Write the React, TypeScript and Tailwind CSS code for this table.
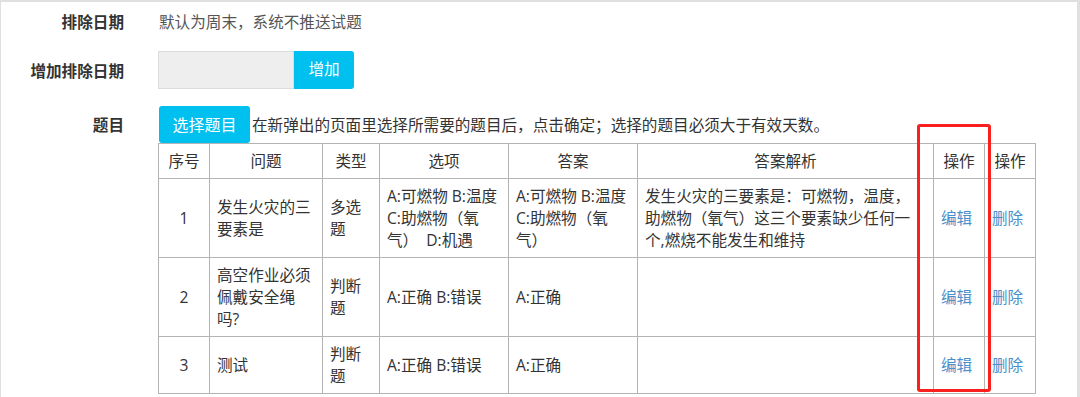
import React from "react";

const FONT = { fontFamily: '"Open Sans", "Noto Sans CJK SC", sans-serif' };

type Row = {
  no: number;
  question: string[];
  kind: string[];
  options: string[];
  answer: string[];
  analysis: string[];
};

const ROWS: Row[] = [
  {
    no: 1,
    question: ["发生火灾的三", "要素是"],
    kind: ["多选", "题"],
    options: ["A:可燃物 B:温度", "C:助燃物（氧", "气）  D:机遇"],
    answer: ["A:可燃物 B:温度", "C:助燃物（氧", "气）"],
    analysis: ["发生火灾的三要素是：可燃物，温度，", "助燃物（氧气）这三个要素缺少任何一", "个,燃烧不能发生和维持"],
  },
  {
    no: 2,
    question: ["高空作业必须", "佩戴安全绳", "吗?"],
    kind: ["判断", "题"],
    options: ["A:正确 B:错误"],
    answer: ["A:正确"],
    analysis: [],
  },
  {
    no: 3,
    question: ["测试"],
    kind: ["判断", "题"],
    options: ["A:正确 B:错误"],
    answer: ["A:正确"],
    analysis: [],
  },
];

function Lines({ lines }: { lines: string[] }) {
  return (
    <>
      {lines.map((l, i) => (
        <span key={i} className="block whitespace-pre">
          {l}
        </span>
      ))}
    </>
  );
}

const th = "border border-[#b4b4b4] px-[6px] py-[6px] font-normal text-center";
const td = "border border-[#b4b4b4] px-[7px] py-[6px] align-middle";

export default function App() {
  return (
    <div
      className="relative w-[1080px] h-[397px] overflow-hidden bg-white border-t-2 border-l border-r-[3px] border-[#e0e0e0] text-[15.6px] text-[#333]"
      style={FONT}
    >
      <div className="pt-[2px]">
        {/* 排除日期 */}
        <div className="flex items-center h-[38px]">
          <div className="w-[123px] text-right font-bold">排除日期</div>
          <div className="ml-[35px] text-[#555]">默认为周末，系统不推送试题</div>
        </div>

        {/* 增加排除日期 */}
        <div className="flex items-center mt-[9px]">
          <div className="w-[123px] text-right font-bold pt-[3px]">增加排除日期</div>
          <div className="ml-[34px] flex">
            <input className="w-[136px] h-[38px] bg-[#eeeeee] border border-[#dcdcdc] outline-none px-2" />
            <button className="w-[60px] h-[38px] bg-[#00c0ef] text-white rounded-r-[3px]">增加</button>
          </div>
        </div>

        {/* 题目 */}
        <div className="flex mt-[17px]">
          <div className="w-[123px] text-right font-bold h-[37px] flex items-center justify-end pt-[2px]">题目</div>
          <div className="ml-[34px] flex flex-col">
            <div className="flex items-center">
              <button className="ml-[1px] w-[91px] h-[37px] bg-[#00c0ef] text-white rounded-[3px] text-[16px]">选择题目</button>
              <span className="ml-[2px] pt-[2px]">在新弹出的页面里选择所需要的题目后，点击确定；选择的题目必须大于有效天数。</span>
            </div>
            <table className="table-fixed border-collapse w-[877px] leading-[22px]">
              <colgroup>
                <col className="w-[51px]" />
                <col className="w-[113px]" />
                <col className="w-[57px]" />
                <col className="w-[129px]" />
                <col className="w-[129px]" />
                <col className="w-[296px]" />
                <col className="w-[51px]" />
                <col className="w-[51px]" />
              </colgroup>
              <thead>
                <tr>
                  <th className={th}>序号</th>
                  <th className={th}>问题</th>
                  <th className={th}>类型</th>
                  <th className={th}>选项</th>
                  <th className={th}>答案</th>
                  <th className={th}>答案解析</th>
                  <th className={th}>操作</th>
                  <th className={th}>操作</th>
                </tr>
              </thead>
              <tbody>
                {ROWS.map((r) => (
                  <tr key={r.no}>
                    <td className={td + " text-center"}>{r.no}</td>
                    <td className={td}><Lines lines={r.question} /></td>
                    <td className={td}><Lines lines={r.kind} /></td>
                    <td className={td + " px-[5px]"}><Lines lines={r.options} /></td>
                    <td className={td}><Lines lines={r.answer} /></td>
                    <td className={td}><Lines lines={r.analysis} /></td>
                    <td className={td + " text-[#4a8fc9] whitespace-nowrap px-[5px]"}>编辑</td>
                    <td className={td + " text-[#4a8fc9] whitespace-nowrap px-[5px]"}>删除</td>
                  </tr>
                ))}
              </tbody>
            </table>
          </div>
        </div>
      </div>

      {/* red highlight box */}
      <div className="absolute left-[916px] top-[122px] w-[74px] h-[268px] border-[3px] border-[#fa2020] rounded-[3px] pointer-events-none" />
    </div>
  );
}
